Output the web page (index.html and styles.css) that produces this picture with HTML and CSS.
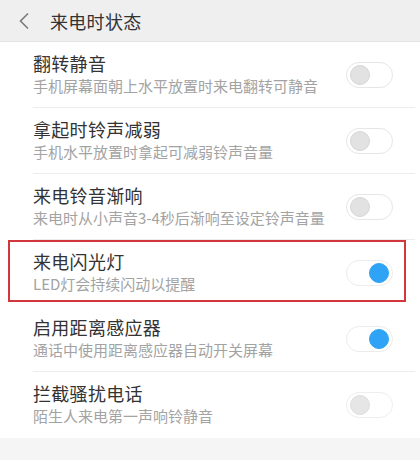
FILE: index.html
```html
<!DOCTYPE html>
<html lang="zh-CN">
<head>
<meta charset="utf-8">
<link rel="stylesheet" href="styles.css">
</head>
<body>
<div class="page">
  <header class="topbar">
    <svg class="back" width="16" height="20" viewBox="0 0 16 20"><polyline points="12,2.5 4.5,10 12,17.5" fill="none" stroke="#7a7a7a" stroke-width="1.6"/></svg>
    <span class="title">来电时状态</span>
  </header>
  <div class="list">
    <div class="row">
      <div class="text"><div class="name">翻转静音</div><div class="desc">手机屏幕面朝上水平放置时来电翻转可静音</div></div>
      <div class="switch"><span class="knob"></span></div>
    </div>
    <div class="row">
      <div class="text"><div class="name">拿起时铃声减弱</div><div class="desc">手机水平放置时拿起可减弱铃声音量</div></div>
      <div class="switch"><span class="knob"></span></div>
    </div>
    <div class="row">
      <div class="text"><div class="name">来电铃音渐响</div><div class="desc">来电时从小声音3-4秒后渐响至设定铃声音量</div></div>
      <div class="switch"><span class="knob"></span></div>
    </div>
    <div class="row highlighted">
      <div class="text"><div class="name">来电闪光灯</div><div class="desc">LED灯会持续闪动以提醒</div></div>
      <div class="switch on"><span class="knob"></span></div>
      <div class="mark"></div>
    </div>
    <div class="row">
      <div class="text"><div class="name">启用距离感应器</div><div class="desc">通话中使用距离感应器自动开关屏幕</div></div>
      <div class="switch on"><span class="knob"></span></div>
    </div>
    <div class="row last">
      <div class="text"><div class="name">拦截骚扰电话</div><div class="desc">陌生人来电第一声响铃静音</div></div>
      <div class="switch faded"><span class="knob"></span></div>
    </div>
  </div>
  <div class="footer"></div>
</div>
</body>
</html>
```

FILE: styles.css
```css
html, body {
  margin: 0;
  padding: 0;
  background: #ffffff;
}
body {
  font-family: "Noto Sans CJK SC", "Noto Sans", sans-serif;
  width: 420px;
  height: 460px;
  overflow: hidden;
}
.page {
  display: flex;
  flex-direction: column;
  height: 460px;
}
.topbar {
  height: 41px;
  background: #efefef;
  border-bottom: 1px solid #e4e4e4;
  display: flex;
  align-items: center;
  flex-shrink: 0;
}
.back {
  margin-left: 16px;
  display: block;
}
.title {
  margin-left: 18px;
  font-size: 18px;
  line-height: 22px;
  color: #333333;
  letter-spacing: 0.3px;
}
.list {
  display: flex;
  flex-direction: column;
}
.row {
  position: relative;
  height: 66px;
  display: flex;
  align-items: center;
  margin-left: 33px;
  margin-right: 5px;
  border-bottom: 1px solid #ececec;
  box-sizing: border-box;
}
.row.last {
  border-bottom: none;
}
.text {
  flex: 1;
  display: flex;
  flex-direction: column;
  padding-bottom: 2px;
}
.name {
  font-size: 18px;
  line-height: 22px;
  color: #333333;
  letter-spacing: 0.3px;
}
.desc {
  margin-top: 2px;
  font-size: 15px;
  line-height: 20px;
  color: #a3a3a3;
}
.switch {
  width: 47px;
  height: 26px;
  box-sizing: border-box;
  border: 1px solid #e6e6e6;
  border-radius: 13px;
  background: #ffffff;
  margin-right: 22px;
  display: flex;
  align-items: center;
  padding: 0 3px;
}
.knob {
  width: 20px;
  height: 20px;
  box-sizing: border-box;
  border-radius: 50%;
  background: #e2e2e2;
  border: 1px solid #d6d6d6;
}
.switch.on {
  justify-content: flex-end;
  border-color: #ececec;
}
.switch.on .knob {
  background: #2fa3f5;
  border-color: #2fa3f5;
}
.switch.faded {
  border-color: #eeeeee;
}
.switch.faded .knob {
  background: #e6e6e6;
  border-color: #dedede;
}
.mark {
  position: absolute;
  left: -25px;
  right: 9px;
  top: 0;
  bottom: 3px;
  border: 2px solid #d2373d;
  pointer-events: none;
}
.highlighted {
  border-bottom-color: transparent;
}
.footer {
  flex: 1;
  background: #f5f5f5;
}
```
